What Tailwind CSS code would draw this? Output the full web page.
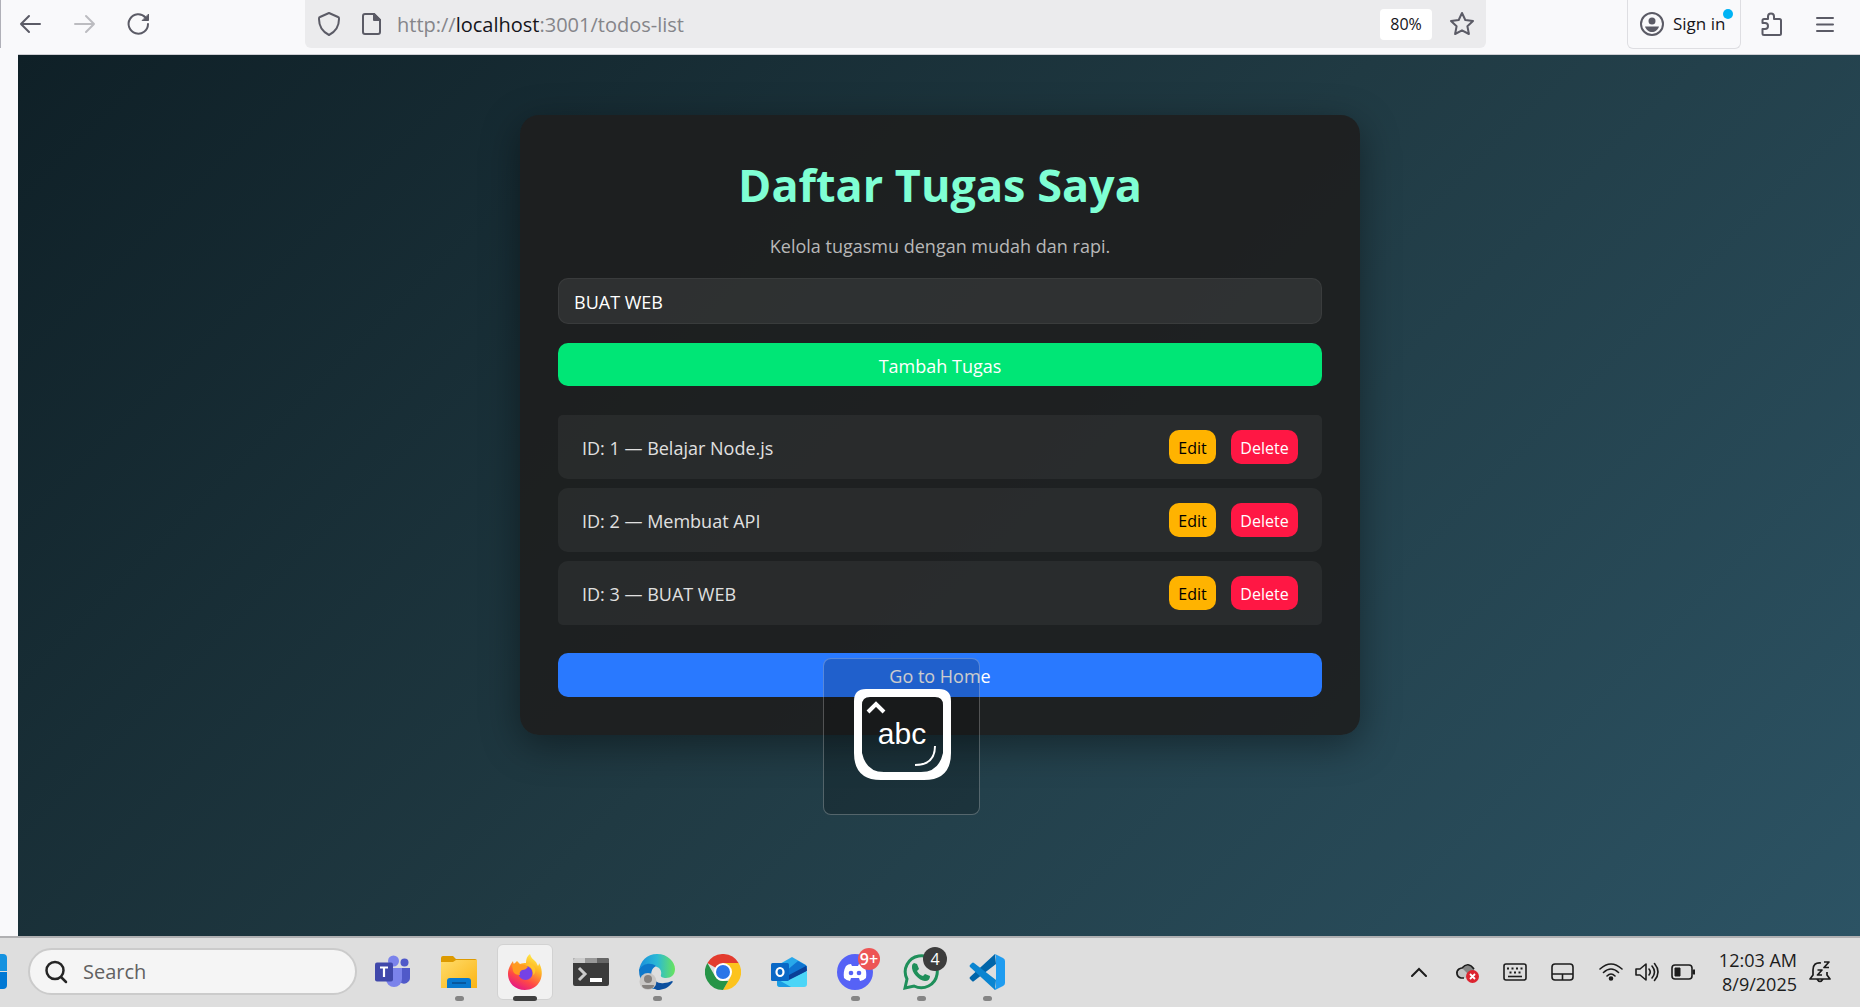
<!DOCTYPE html>
<html lang="en">
<head>
<meta charset="utf-8">
<title>Todos</title>
<script src="https://cdn.jsdelivr.net/npm/@tailwindcss/browser@4"></script>
</head>
<body class="h-screen flex flex-col overflow-hidden bg-[#f9f9fb] font-['Segoe_UI','Open_Sans',sans-serif]">

<!-- Browser toolbar -->
<header class="flex h-[54px] shrink-0 items-start text-[#5b5b66]">
  <div class="flex h-12 w-[305px] shrink-0 items-center gap-7 border-l border-[#b0b0b8] pl-4">
    <button aria-label="Back"><svg class="size-[26px]" viewBox="0 0 26 26" fill="none" stroke="currentColor" stroke-width="2" stroke-linecap="round" stroke-linejoin="round"><path d="M23 13H4M12 5L4 13l8 8"/></svg></button>
    <button aria-label="Forward" class="text-[#bcbcc0]"><svg class="size-[26px]" viewBox="0 0 26 26" fill="none" stroke="currentColor" stroke-width="2" stroke-linecap="round" stroke-linejoin="round"><path d="M4 13h19M15 5l8 8-8 8"/></svg></button>
    <button aria-label="Reload"><svg class="size-[26px]" viewBox="0 0 26 26" fill="none" stroke="currentColor" stroke-width="2" stroke-linecap="round"><path d="M20.500 6.500A9.700 9.700 0 1 0 23 13"/><path d="M23.500 3.500v6h-6z" fill="currentColor" stroke-width="1" stroke-linejoin="round"/></svg></button>
  </div>
  <div class="flex h-12 flex-1 items-center rounded-b-md bg-[#ebebed] px-[11px]">
    <svg class="size-[26px] shrink-0" viewBox="0 0 26 26" fill="none" stroke="currentColor" stroke-width="2" stroke-linejoin="round"><path d="M13 2l9 4c1 0 1 1 1 2 0 8-4 13-10 16C7 21 3 16 3 8c0-1 0-2 1-2z"/></svg>
    <svg class="ml-4 size-[26px] shrink-0" viewBox="0 0 26 26" fill="none" stroke="currentColor" stroke-width="2" stroke-linejoin="round"><path d="M7 3h9l6 6v12a2 2 0 0 1-2 2H7a2 2 0 0 1-2-2V5a2 2 0 0 1 2-2z"/><path d="M16 3v6h6z" fill="currentColor"/></svg>
    <div class="ml-[13px] flex-1 pt-0.5 text-xl text-[#85858a]">http://<span class="text-[#15141a]">localhost</span>:3001/todos-list</div>
    <button class="h-[31px] w-[52px] rounded bg-white text-base text-[#15141a]">80%</button>
    <button aria-label="Bookmark" class="ml-[17px]"><svg class="size-[26px]" viewBox="0 0 26 26" fill="none" stroke="currentColor" stroke-width="2" stroke-linejoin="round"><path d="M13 2l3.300 7 7.700 1-5.600 5.200 1.500 7.800L13 19.300 6.100 23l1.500-7.800L2 10l7.700-1z"/></svg></button>
  </div>
  <div class="flex h-[49px] w-[374px] shrink-0 items-center pl-[141px]">
    <button class="relative flex h-[49px] w-[114px] items-center gap-2 rounded-b-md border border-t-0 border-[#dedee2] pl-[11px] text-[17px] whitespace-nowrap text-[#15141a]">
      <svg class="size-[26px] shrink-0 text-[#5b5b66]" viewBox="0 0 26 26" fill="none" stroke="currentColor" stroke-width="2"><circle cx="13" cy="13" r="11"/><circle cx="13" cy="10" r="3.500" fill="currentColor" stroke="none"/><path d="M6 15.500h14c-1 3.500-4 5.500-7 5.500s-6-2-7-5.500z" fill="currentColor" stroke="none"/></svg>
      Sign in
      <span class="absolute top-[9px] right-[7px] size-2.5 rounded-full bg-[#00b3f4]"></span>
    </button>
    <button aria-label="Extensions" class="ml-[18px]"><svg class="size-[26px]" viewBox="0 0 26 26" fill="none" stroke="currentColor" stroke-width="2" stroke-linejoin="round"><path d="M3.500 11V8.500Q3.500 7 5 7h4V4.500a3 3 0 0 1 6 0V7h5.500Q22 7 22 8.500v13q0 1.500-1.500 1.500H5q-1.500 0-1.500-1.500V17H6a3 3 0 0 0 0-6z"/></svg></button>
    <button aria-label="Menu" class="ml-[27px]"><svg class="size-[26px]" viewBox="0 0 26 26" fill="none" stroke="currentColor" stroke-width="2" stroke-linecap="round"><path d="M5 6h16M5 12.500h16M5 19h16"/></svg></button>
  </div>
</header>

<!-- Todo page -->
<main class="ml-[18px] flex min-h-0 flex-1 items-start justify-center border-t border-[#cfcfd4] bg-linear-135 from-[#0f2027] via-[#203a43] to-[#2c5364] pt-[60px] pl-0.5">
  <section class="relative w-[840px] rounded-[19px] bg-[#1e1e1e]/90 px-[38px] pt-10 pb-[38px] text-center shadow-[0_10px_38px_rgba(0,0,0,0.4)]">
    <h1 class="text-[45px] leading-[60px] font-bold text-[#7fffd4]">Daftar Tugas Saya</h1>
    <p class="mt-[17px] text-lg leading-7 text-[#b8b8b8]">Kelola tugasmu dengan mudah dan rapi.</p>
    <form class="mt-[18px]">
      <input aria-label="Tugas" value="BUAT WEB" class="block h-[46px] w-full rounded-[10px] border border-white/5 bg-white/8 px-[15px] pt-0.5 text-lg text-white">
      <button type="button" class="mt-[19px] block h-[43px] w-full rounded-[10px] bg-[#00e676] pt-0.5 text-lg text-white">Tambah Tugas</button>
    </form>
    <ul class="mt-[29px] flex flex-col gap-[9px] text-left text-lg text-[#e0e0e0]">
      <li class="flex h-16 items-center gap-[15px] rounded-t-[5px] rounded-b-[10px] bg-white/5 px-6"><span class="flex-1 pt-0.5">ID: 1 — Belajar Node.js</span><button class="h-[34px] w-[47px] rounded-[10px] bg-[#ffb300] pt-px text-base text-black">Edit</button><button class="h-[34px] w-[67px] rounded-[10px] bg-[#ff1744] pt-px text-base text-white">Delete</button></li>
      <li class="flex h-16 items-center gap-[15px] rounded-[10px] bg-white/5 px-6"><span class="flex-1 pt-0.5">ID: 2 — Membuat API</span><button class="h-[34px] w-[47px] rounded-[10px] bg-[#ffb300] pt-px text-base text-black">Edit</button><button class="h-[34px] w-[67px] rounded-[10px] bg-[#ff1744] pt-px text-base text-white">Delete</button></li>
      <li class="flex h-16 items-center gap-[15px] rounded-t-[10px] rounded-b-[5px] bg-white/5 px-6"><span class="flex-1 pt-0.5">ID: 3 — BUAT WEB</span><button class="h-[34px] w-[47px] rounded-[10px] bg-[#ffb300] pt-px text-base text-black">Edit</button><button class="h-[34px] w-[67px] rounded-[10px] bg-[#ff1744] pt-px text-base text-white">Delete</button></li>
    </ul>
    <a href="#" class="mt-7 flex h-[44px] items-center justify-center rounded-[10px] bg-[#2979ff] pt-0.5 text-lg text-white">Go to Home</a>

    <!-- Caps lock indicator -->
    <div class="absolute -bottom-20 left-[303px] size-[157px] rounded-lg border border-white/25 bg-black/20">
      <svg class="mt-[30px] ml-[30px] h-[91px] w-[97px]" viewBox="0 0 97 91" fill="none"><path fill="#fff" fill-rule="evenodd" d="M12 0h73q12 0 12 12v52q0 27-27 27H27Q0 91 0 64V12Q0 0 12 0zM16 8Q8 8 8 16v48q4 19 22 19h37q18 0 22-19V16q0-8-8-8z"/><g stroke="#fff"><path d="M14 23l8-8 8 8" stroke-width="4"/><path d="M81 57q0 19-20 19" stroke-width="2"/></g><text x="48" y="55" text-anchor="middle" fill="#fff" font-family="Liberation Sans" font-size="30">abc</text></svg>
    </div>
  </section>
</main>

<!-- Taskbar -->
<footer class="flex h-[71px] shrink-0 items-center border-t-2 border-[#b0b0b2] bg-[#dedede] pb-0.5">
  <button aria-label="Start" class="flex w-[7px] flex-col gap-px"><span class="h-[17px] rounded-tr-sm bg-[#1592e0]"></span><span class="h-[17px] rounded-br-sm bg-[#0078d4]"></span></button>
  <label class="ml-[21px] flex h-[47px] w-[329px] items-center rounded-full border-2 border-[#cbcbcb] bg-[#f5f5f5] pl-[14px]">
    <svg class="size-6 shrink-0" viewBox="0 0 24 24" fill="none" stroke="#252525" stroke-width="2.500" stroke-linecap="round"><circle cx="11" cy="10.500" r="8.500"/><path d="M17 17l5 5"/></svg>
    <input aria-label="Search" placeholder="Search" class="ml-[15px] w-48 text-xl placeholder:text-[#616161]">
  </label>
  <nav class="ml-2 flex gap-[10px]">
    <button aria-label="Teams" class="relative flex size-14 items-center justify-center"><svg class="size-9" viewBox="0 0 36 36"><circle cx="18.500" cy="7" r="5.500" fill="#7b83eb"/><circle cx="29.500" cy="8.500" r="4" fill="#5059c9"/><path d="M25 14h10v9a6 6 0 0 1-10 5z" fill="#5059c9"/><path d="M11 14h16v11a8 8 0 0 1-16 0z" fill="#7b83eb"/><rect y="8.500" width="18" height="19" rx="2" fill="#4048ab"/><path d="M5 13.500h8M9 13.500V23" stroke="#fff" stroke-width="2.200"/></svg></button>
    <button aria-label="File Explorer" class="relative flex size-14 items-center justify-center"><svg class="size-9" viewBox="0 0 36 36"><defs><linearGradient id="fo" x2="1" y2="1"><stop stop-color="#ffdc6b"/><stop offset="1" stop-color="#fbb414"/></linearGradient></defs><path d="M0 4q0-2 2-2h10l3 3h19q2 0 2 2v3H0z" fill="#dd9a00"/><path d="M0 8h12l3-2h21v28H0z" fill="url(#fo)"/><path d="M6 34V27q0-3 3-3h18q3 0 3 3v7z" fill="#0878ce"/><path d="M11 29h14" stroke="#064c8e" stroke-width="1.500"/></svg><span class="absolute -bottom-[1px] h-[5px] w-[9px] rounded-full bg-[#858585]"></span></button>
    <button aria-label="Firefox" class="relative flex size-14 items-center justify-center rounded-md border border-[#d2d2d2] bg-[#f1f1f1]"><svg class="size-9" viewBox="0 0 36 36"><defs><linearGradient id="fx" x1=".8" y1="0" x2=".3" y2="1"><stop stop-color="#fff44f"/><stop offset=".35" stop-color="#ffb424"/><stop offset=".7" stop-color="#ff4a45"/><stop offset="1" stop-color="#e31587"/></linearGradient></defs><path d="M23 0c1 4 3 5 6 8l2 4c1-1 1-3 1-3 3 5 4 12 1 18-3 6-9 9-15 9C8 36 1 29 1 20c0-5 2-9 5-13 0 2 1 3 1 3l3-3 3 3c2-1 4-1 6-1 0-4 1-7 4-9z" fill="url(#fx)"/><circle cx="18.500" cy="19" r="7" fill="#7542e5"/><path d="M5 11c4-3 6-1 8 0 3-1 6 0 8 2-2 2-3 3-6 3-2 1-3 3-2 5-3 0-6-1-7-4z" fill="#ff9a20"/><path d="M19 11c5 1 8 5 7 10 2-1 3-4 2-7-2-4-5-5-9-3z" fill="#ffc52c"/></svg><span class="absolute -bottom-[2px] h-[5px] w-6 rounded-full bg-[#404040]"></span></button>
    <button aria-label="Terminal" class="relative flex size-14 items-center justify-center"><svg class="size-9" viewBox="0 0 36 36"><rect y="4" width="36" height="28" rx="2" fill="#3b3b3b"/><path d="M0 9V6q0-2 2-2h10v5z" fill="#ccc"/><path d="M12 4h12v5H12z" fill="#999"/><path d="M24 4h10q2 0 2 2v3H24z" fill="#666"/><path d="M6 14l6 6-6 6" fill="none" stroke="#ccc" stroke-width="3"/><path d="M17 26h12" stroke="#fff" stroke-width="4"/></svg></button>
    <button aria-label="Edge" class="relative flex size-14 items-center justify-center"><svg class="size-9" viewBox="0 0 36 36"><defs><linearGradient id="ed"><stop stop-color="#1a8fdc"/><stop offset=".5" stop-color="#2bb9d5"/><stop offset="1" stop-color="#69e45c"/></linearGradient></defs><path d="M0 17C1 7 8 0 18 0c11 0 18 8 18 15 0 6-4 9-9 9-3 0-6-1-5-3 1-4-1-7-4-8C12 10 4 11 0 17z" fill="url(#ed)"/><path d="M0 16c4-7 12-8 17-4-4 2-6 7-4 12l4 11C7 35 0 28 0 16z" fill="#0e78ca"/><path d="M13 21c1 6 7 9 12 8 3 0 5-1 8-2 1 0 1 1 0 2-4 5-9 7-15 7-6-2-8-10-5-15z" fill="#0c4f9e"/><circle cx="9" cy="27.500" r="8.500" fill="#c9c7c5"/><circle cx="9" cy="25" r="4" fill="#85817e"/><path d="M3 31h12q0 4-6 4t-6-4z" fill="#85817e"/></svg><span class="absolute -bottom-[1px] h-[5px] w-[9px] rounded-full bg-[#858585]"></span></button>
    <button aria-label="Chrome" class="relative flex size-14 items-center justify-center"><svg class="size-9" viewBox="0 0 36 36"><path d="M18 18L2.400 9A18 18 0 0 1 33.600 9z" fill="#e33b2e"/><path d="M18 9h15.600A18 18 0 0 1 18 36l7.800-13.500z" fill="#fcc31e"/><path d="M2.400 9l7.800 13.500q3 5 8 4.500h5L18 36A18 18 0 0 1 2.400 9z" fill="#269447"/><circle cx="18" cy="18" r="9" fill="#fff"/><circle cx="18" cy="18" r="7" fill="#2a76e8"/></svg></button>
    <button aria-label="Outlook" class="relative flex size-14 items-center justify-center"><svg class="size-9" viewBox="0 0 36 36"><path d="M7 11l14-8 14 8v13H7z" fill="#28a8ea"/><path d="M15 17L27 7l9 5v4L18 27z" fill="#0f74d1"/><path d="M18 21l17-9 1 5-18 10z" fill="#0a3f97"/><path d="M6 22l12 4 18-9v13q0 3-3 3H9q-3 0-3-3z" fill="#4bd5f7"/><path d="M6 25l14 8H9q-3 0-3-3z" fill="#1b9ce3"/><rect y="9" width="18" height="18" rx="1.500" fill="#0968c6"/><ellipse cx="9" cy="18" rx="3.500" ry="4" fill="none" stroke="#fff" stroke-width="2.200"/></svg></button>
    <button aria-label="Discord" class="relative flex size-14 items-center justify-center"><svg class="size-9" viewBox="0 0 36 36"><circle cx="18" cy="18" r="18" fill="#5662f6"/><path d="M14 10l1 2h6l1-2q3 0 5 2 3 5 2 12-3 3-6 3l-1-3h-8l-1 3q-3 0-6-3-1-7 2-12 2-2 5-2z" fill="#fff"/><circle cx="14" cy="19" r="2.300" fill="#5662f6"/><circle cx="22" cy="19" r="2.300" fill="#5662f6"/></svg><span class="absolute top-1 right-[3px] flex size-[22px] items-center justify-center rounded-full bg-[#ed5555] text-base font-semibold text-white">9+</span><span class="absolute -bottom-[1px] h-[5px] w-[9px] rounded-full bg-[#858585]"></span></button>
    <button aria-label="WhatsApp" class="relative flex size-14 items-center justify-center"><svg class="size-9" viewBox="0 0 36 36"><path d="M2 34l2-9a16 16 0 1 1 7 7z" fill="none" stroke="#1f8f5a" stroke-width="3"/><path d="M11 9l3 1 2 5-2 2q2 4 6 5l2-2 5 2q0 5-5 5C16 27 8 18 9 12q0-2 2-3z" fill="#1f8f5a"/></svg><span class="absolute top-[3px] right-[2px] flex size-6 items-center justify-center rounded-full bg-[#3c3c3c] text-base text-white">4</span><span class="absolute -bottom-[1px] h-[5px] w-[9px] rounded-full bg-[#858585]"></span></button>
    <button aria-label="VS Code" class="relative flex size-14 items-center justify-center"><svg class="size-9" viewBox="0 0 36 36"><path d="M26 0L1 23q-1 1 0 2l2 2q1 1 2 0L27 10z" fill="#0065a9"/><path d="M26 36L1 13q-1-1 0-2l2-2q1-1 2 0l22 17z" fill="#0a85d1"/><path d="M26 0l8 4q2 1 2 3v22q0 2-2 3l-8 4q-1 0 1-3V3z" fill="#1f9cf0"/></svg><span class="absolute -bottom-[1px] h-[5px] w-[9px] rounded-full bg-[#858585]"></span></button>
  </nav>
  <div class="ml-auto flex items-center pr-[29px] text-[#1c1c1c]">
    <svg class="mr-7 w-4" viewBox="0 0 16 10" fill="none" stroke="currentColor" stroke-width="2" stroke-linecap="round"><path d="M1 9l7-7 7 7"/></svg>
    <svg class="mr-6 size-6" viewBox="0 0 24 24"><path d="M6 18A5 5 0 0 1 4 9q2-1 3-1 6-7 12 1l2 3-8 6z" fill="#c4c4c4"/><path d="M7 8q6-6 12 1v4l-6 1z" fill="#858585"/><path d="M9 18H6A5 5 0 0 1 4 9q2-1 3-1 6-7 12 1" fill="none" stroke="#1c1c1c" stroke-width="1.700"/><circle cx="17.500" cy="16.500" r="6.500" fill="#dc2430"/><path d="M15 14l5 5m0-5l-5 5" stroke="#fff" stroke-width="1.800"/></svg>
    <svg class="mr-6 size-6" viewBox="0 0 24 24" fill="none" stroke="currentColor" stroke-width="1.600"><rect x="1" y="4" width="22" height="16" rx="2"/><path d="M4 8.500h16M6.500 12.500h11" stroke-width="2" stroke-dasharray="2 2.500"/><path d="M5 16.500h14"/></svg>
    <svg class="mr-6 size-6" viewBox="0 0 24 24" fill="none" stroke="currentColor" stroke-width="1.600"><rect x="1" y="4" width="21" height="16" rx="3"/><path d="M1 14h21M11.500 14v6"/></svg>
    <svg class="mr-3 size-6" viewBox="0 0 24 24" fill="none" stroke="currentColor" stroke-width="1.600" stroke-linecap="round"><path d="M1 9q11-10 22 0M4.500 12.500q7.500-7 15 0M8 16q4-4 8 0"/><circle cx="12" cy="18.500" r="1.500" fill="currentColor"/></svg>
    <svg class="mr-3 size-6" viewBox="0 0 24 24" fill="none" stroke="currentColor" stroke-width="1.600" stroke-linecap="round" stroke-linejoin="round"><path d="M1 9h4l6-5v16l-6-5H1zM14 9q2.500 3 0 6M17 6q5 6 0 12M19.500 3.500q7 8.500 0 17"/></svg>
    <svg class="mr-[22px] size-6" viewBox="0 0 24 24" fill="none" stroke="currentColor" stroke-width="1.600"><rect x="1" y="5" width="20" height="14" rx="3"/><path d="M4 8h5v8H4zM22 10h2v4h-2z" fill="currentColor" stroke-width="1"/></svg>
    <div class="w-20 text-right text-lg leading-6 whitespace-nowrap">12:03 AM<br>8/9/2025</div>
    <svg class="ml-3 h-6 w-[22px]" viewBox="0 0 22 24" fill="none" stroke="currentColor" stroke-width="1.700" stroke-linejoin="round"><path d="M12 3q-8-1-8 7v5l-3 4h20l-3-4v-3M8 19q3 5 6 0M8.500 10h4.500l-4.500 5H13M15 2h5l-5 5.500h5"/></svg>
  </div>
</footer>
</body>
</html>
